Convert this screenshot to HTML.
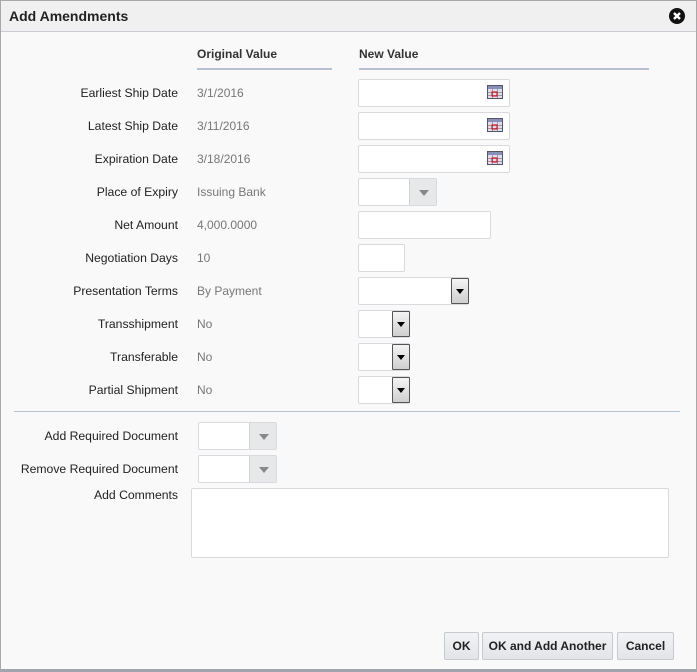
<!DOCTYPE html>
<html><head><style>
*{margin:0;padding:0;box-sizing:border-box}
body{width:697px;height:672px;background:#f9f9f9;font-family:"Liberation Sans",Arial,sans-serif;font-size:12px;position:relative;overflow:hidden}
.frame{position:absolute;left:0;top:0;width:697px;height:672px;border:1px solid #a8a8a8;border-bottom:3px solid #a0a4ac;pointer-events:none;z-index:5}
.hdr{position:absolute;left:0;top:0;width:697px;height:32px;background:#f0f0f0;border-bottom:1px solid #c9ccd2}
.title{position:absolute;left:9px;top:8px;font-size:14px;font-weight:bold;color:#222}
.abs{position:absolute}
.wrap{position:absolute;left:0;top:1px;width:697px;height:671px}
.lbl{position:absolute;right:519px;color:#222;white-space:nowrap;text-align:right;font-size:12.2px}
.ov{position:absolute;left:197px;color:#777}
.inp{position:absolute;background:#fff;border:1px solid #d8dadd;border-radius:2px}
.gbtn{position:absolute;top:0;right:0;bottom:0;width:27px;background:#e7e8ea;border-left:1px solid #d0d2d5}
.gbtn:after{content:"";position:absolute;left:9px;top:11px;border:5px solid transparent;border-top:6px solid #888;border-bottom:0}
.bbtn{position:absolute;background:linear-gradient(#f4f4f4,#cfcfcf);border:1px solid #555;border-radius:1px}
.bbtn:after{content:"";position:absolute;left:4px;top:10px;border:4px solid transparent;border-top:5px solid #000;border-bottom:0}
.btn{position:absolute;height:28px;background:linear-gradient(#f2f3f5,#e2e4e7);border:1px solid #c6c9ce;border-radius:2px;font-weight:bold;color:#222;text-align:center;line-height:26px;font-size:12px}
</style></head><body>
<div class="frame"></div>
<div class="hdr"><div class="title">Add Amendments</div>
<svg class="abs" style="left:668px;top:7px" width="18" height="18" viewBox="0 0 18 18"><circle cx="9" cy="9" r="8" fill="#111"/><path d="M6 6L12 12M12 6L6 12" stroke="#fff" stroke-width="2.4"/></svg></div>
<div class="wrap">
<div class="abs" style="left:197px;top:46px;font-weight:bold;color:#333">Original Value</div>
<div class="abs" style="left:359px;top:46px;font-weight:bold;color:#333">New Value</div>
<div class="abs" style="left:197px;top:67px;width:135px;height:2px;background:#b9c0d4"></div>
<div class="abs" style="left:359px;top:67px;width:290px;height:2px;background:#b9c0d4"></div>

<div class="lbl" style="top:85px">Earliest Ship Date</div><div class="ov" style="top:85px">3/1/2016</div>
<div class="lbl" style="top:118px">Latest Ship Date</div><div class="ov" style="top:118px">3/11/2016</div>
<div class="lbl" style="top:151px">Expiration Date</div><div class="ov" style="top:151px">3/18/2016</div>
<div class="lbl" style="top:184px">Place of Expiry</div><div class="ov" style="top:184px">Issuing Bank</div>
<div class="lbl" style="top:217px">Net Amount</div><div class="ov" style="top:217px">4,000.0000</div>
<div class="lbl" style="top:250px">Negotiation Days</div><div class="ov" style="top:250px">10</div>
<div class="lbl" style="top:283px">Presentation Terms</div><div class="ov" style="top:283px">By Payment</div>
<div class="lbl" style="top:316px">Transshipment</div><div class="ov" style="top:316px">No</div>
<div class="lbl" style="top:349px">Transferable</div><div class="ov" style="top:349px">No</div>
<div class="lbl" style="top:382px">Partial Shipment</div><div class="ov" style="top:382px">No</div>

<div class="inp" style="left:358px;top:78px;width:152px;height:28px"></div>
<div class="inp" style="left:358px;top:111px;width:152px;height:28px"></div>
<div class="inp" style="left:358px;top:144px;width:152px;height:28px"></div>
<svg class="abs" style="left:487px;top:84px" width="16" height="14" viewBox="0 0 16 14"><rect x="0.5" y="0.5" width="15" height="13" fill="#dde" stroke="#556"/><rect x="1" y="1" width="14" height="3" fill="#8890b8"/><path d="M1 7.5H15M1 10.5H15M5.5 4V13M10.5 4V13" stroke="#99a" stroke-width="1"/><rect x="5" y="7" width="5" height="4" fill="none" stroke="#d00"/></svg>
<svg class="abs" style="left:487px;top:117px" width="16" height="14" viewBox="0 0 16 14"><rect x="0.5" y="0.5" width="15" height="13" fill="#dde" stroke="#556"/><rect x="1" y="1" width="14" height="3" fill="#8890b8"/><path d="M1 7.5H15M1 10.5H15M5.5 4V13M10.5 4V13" stroke="#99a" stroke-width="1"/><rect x="5" y="7" width="5" height="4" fill="none" stroke="#d00"/></svg>
<svg class="abs" style="left:487px;top:150px" width="16" height="14" viewBox="0 0 16 14"><rect x="0.5" y="0.5" width="15" height="13" fill="#dde" stroke="#556"/><rect x="1" y="1" width="14" height="3" fill="#8890b8"/><path d="M1 7.5H15M1 10.5H15M5.5 4V13M10.5 4V13" stroke="#99a" stroke-width="1"/><rect x="5" y="7" width="5" height="4" fill="none" stroke="#d00"/></svg>

<div class="inp" style="left:358px;top:177px;width:79px;height:28px"><div class="gbtn"></div></div>
<div class="inp" style="left:358px;top:210px;width:133px;height:28px"></div>
<div class="inp" style="left:358px;top:243px;width:47px;height:28px"></div>
<div class="inp" style="left:358px;top:276px;width:111px;height:28px"></div><div class="bbtn" style="left:451px;top:277px;width:18px;height:26px"></div>
<div class="inp" style="left:358px;top:309px;width:52px;height:28px"></div><div class="bbtn" style="left:392px;top:310px;width:18px;height:26px"></div>
<div class="inp" style="left:358px;top:342px;width:52px;height:28px"></div><div class="bbtn" style="left:392px;top:343px;width:18px;height:26px"></div>
<div class="inp" style="left:358px;top:375px;width:52px;height:28px"></div><div class="bbtn" style="left:392px;top:376px;width:18px;height:26px"></div>

<div class="abs" style="left:14px;top:410px;width:666px;height:1px;background:#b9c0d4"></div>

<div class="lbl" style="top:428px">Add Required Document</div>
<div class="lbl" style="top:461px">Remove Required Document</div>
<div class="lbl" style="top:487px">Add Comments</div>
<div class="inp" style="left:198px;top:421px;width:79px;height:28px"><div class="gbtn"></div></div>
<div class="inp" style="left:198px;top:454px;width:79px;height:28px"><div class="gbtn"></div></div>
<div class="inp" style="left:191px;top:487px;width:478px;height:70px"></div>

<div class="btn" style="left:444px;top:631px;width:35px">OK</div>
<div class="btn" style="left:482px;top:631px;width:131px">OK and Add Another</div>
<div class="btn" style="left:617px;top:631px;width:57px">Cancel</div>
</div>
</body></html>
